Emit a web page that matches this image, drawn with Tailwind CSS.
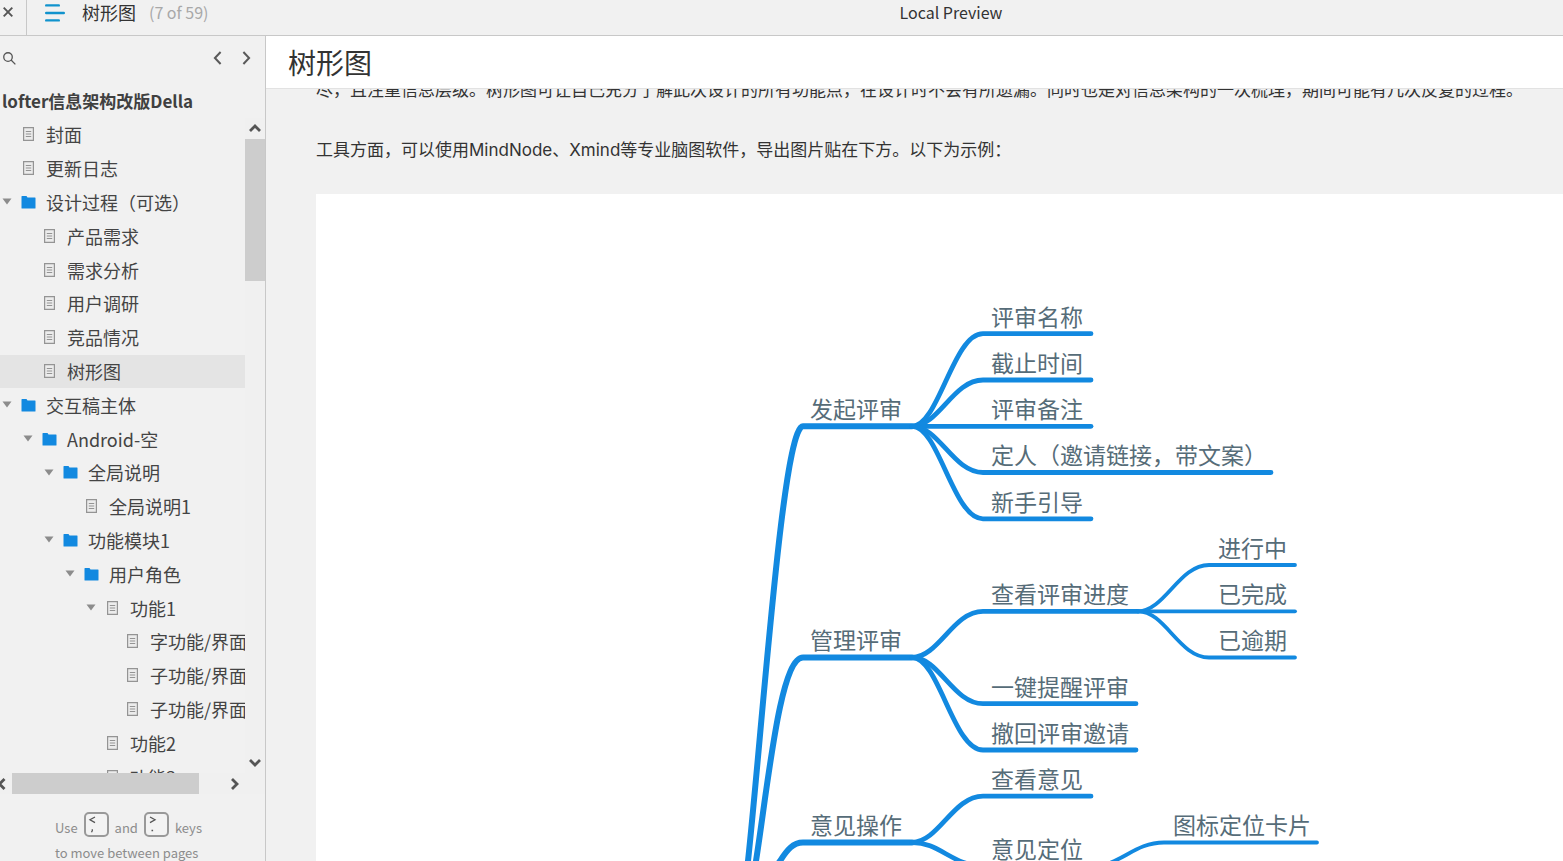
<!DOCTYPE html>
<html lang="zh-CN">
<head>
    <meta charset="UTF-8">
    <meta name="viewport" content="width=device-width, initial-scale=1.0">
    <title>树形图</title>
    <script src="https://cdn.jsdelivr.net/npm/@tailwindcss/browser@4"></script>
</head>
<body class="h-screen flex flex-col overflow-hidden bg-[#f1f1f1] text-[#333] font-['Noto_Sans_CJK_SC',sans-serif]">
    <header class="h-9 shrink-0 flex border-b border-[#c8c8c8]">
        <div class="w-[339px] shrink-0 flex">
            <button class="w-[27px] h-full pl-[3px] pb-[11px] border-r border-[#c8c8c8]" aria-label="关闭">
                <svg class="w-[10px] h-[10px]" viewBox="0 0 10 10" fill="none" stroke="#555" stroke-width="1.9"><path d="M.7.7l8.6 8.6M9.3.7L.7 9.3"/></svg>
            </button>
            <button class="ml-[18px] h-[25px] flex items-center" aria-label="页面列表">
                <svg class="w-5 h-[18px]" viewBox="0 0 20 18" fill="none" stroke="#1193cd" stroke-width="2.4" stroke-linecap="round"><path d="M1.2 1.4h12.6M1.2 9h17.6M1.2 16.4h12.6"/></svg>
            </button>
            <span class="ml-[17px] text-lg leading-6">树形图</span>
            <span class="ml-[13px] text-base leading-6 text-[#a8a8a8]">(7 of 59)</span>
        </div>
        <div class="flex-1 text-center text-base leading-6">Local Preview</div>
    </header>

    <div class="flex-1 min-h-0 flex">
        <aside class="w-[266px] shrink-0 flex flex-col border-r border-[#c8c8c8] text-[#444]">
            <div class="h-11 shrink-0 flex items-center pl-[3px] pr-[14px]">
                <button aria-label="搜索">
                    <svg class="w-[13px] h-[13px]" viewBox="0 0 14 14" fill="none" stroke="#555" stroke-width="1.4"><circle cx="5.4" cy="5.4" r="4.6"/><path d="M8.7 8.7l4.6 4.6"/></svg>
                </button>
                <button class="ml-auto" aria-label="上一页">
                    <svg class="w-[9px] h-[14px]" viewBox="0 0 9 14" fill="none" stroke="#5a5a5a" stroke-width="2"><path d="M7.6 1L1.9 7l5.7 6"/></svg>
                </button>
                <button class="ml-5" aria-label="下一页">
                    <svg class="w-[9px] h-[14px]" viewBox="0 0 9 14" fill="none" stroke="#5a5a5a" stroke-width="2"><path d="M1.4 1l5.7 6-5.7 6"/></svg>
                </button>
            </div>
            <h2 class="h-[38px] shrink-0 pl-[2px] pt-1 text-[17px] leading-[34px] font-bold text-[#404040] whitespace-nowrap"><a href="#">lofter信息架构改版Della</a></h2>

            <div class="h-[655px] shrink-0 flex">
                <nav class="flex-1 min-w-0 overflow-hidden">
                    <ul id="tree" class="h-[676px] grid auto-rows-fr"></ul>
                </nav>
                <div class="w-5 shrink-0 flex flex-col items-center bg-[#f0f0f0]">
                    <svg class="w-3 h-[21px]" viewBox="0 0 12 21" fill="none" stroke="#555" stroke-width="2.8"><path d="M1 13l5-5 5 5"/></svg>
                    <div class="w-full h-[142px] bg-[#cdcdcd]"></div>
                    <svg class="mt-auto w-3 h-[21px]" viewBox="0 0 12 21" fill="none" stroke="#555" stroke-width="2.8"><path d="M1 8l5 5 5-5"/></svg>
                </div>
            </div>
            <div class="h-[21px] shrink-0 flex items-center bg-[#f0f0f0] pr-6">
                <svg class="w-3 h-3" viewBox="0 0 12 12" fill="none" stroke="#555" stroke-width="2.8"><path d="M4.500 1L-.5 6l5 5"/></svg>
                <div class="w-[187px] h-full bg-[#cdcdcd]"></div>
                <svg class="ml-auto w-3 h-3" viewBox="0 0 12 12" fill="none" stroke="#555" stroke-width="2.8"><path d="M3 1l5 5-5 5"/></svg>
            </div>

            <div class="pt-[18px] pl-[55px] text-[13px] leading-5 text-[#8c8c8c] whitespace-nowrap">
                <div class="flex items-start">
                    <span class="pt-[6px]">Use</span>
                    <kbd class="ml-[6px] w-[25px] h-[25px] rounded-[5px] border-2 border-[#999] bg-[#f3f3f3]">
                        <svg class="w-[21px] h-[21px]" viewBox="0 0 21 21" fill="none" stroke="#555" stroke-width="1.3"><path d="M9 3L4 5.800l5 2.800M6.300 15.200v1.500l-.8 1.500"/></svg>
                    </kbd>
                    <span class="ml-[6px] pt-[6px]">and</span>
                    <kbd class="ml-[6px] w-[25px] h-[25px] rounded-[5px] border-2 border-[#999] bg-[#f3f3f3]">
                        <svg class="w-[21px] h-[21px]" viewBox="0 0 21 21" fill="none" stroke="#555" stroke-width="1.3"><path d="M4 3l5 2.800-5 2.800M5.500 16.500h1.600"/></svg>
                    </kbd>
                    <span class="ml-[6px] pt-[6px]">keys</span>
                </div>
                <p class="pt-[5px]">to move between pages</p>
            </div>
        </aside>

        <main class="flex-1 min-w-0 flex flex-col">
            <h1 class="h-[53px] shrink-0 pl-[22px] bg-white border-b border-[#e2e2e2] text-[28px] leading-[53px]">树形图</h1>
            <article class="flex-1 min-h-0 overflow-hidden flex flex-col pl-[50px]">
                <div class="shrink-0 -mt-[14px] text-[17px] leading-[30px] whitespace-nowrap font-[Inter,'Noto_Sans_CJK_SC',sans-serif]">
                    <p>尽，且注重信息层级。树形图可让自己充分了解此次设计的所有功能点，在设计时不会有所遗漏。同时也是对信息架构的一次梳理，期间可能有几次反复的过程。</p>
                    <p class="mt-[30px] mb-[29px]">工具方面，可以使用MindNode、Xmind等专业脑图软件，导出图片贴在下方。以下为示例：</p>
                </div>
                <div class="flex-1 min-h-0 overflow-hidden bg-white">
                    <svg class="w-[1247px] h-[700px] max-w-none" viewBox="0 0 1247 700" role="img" aria-label="评审功能树形图">
                        <g fill="none" stroke="#1289e0" stroke-linecap="round" stroke-linejoin="round">
                            <!-- 主干 -->
                            <g stroke-width="6">
                                <path d="M426 730L432 667C447 527 467 232 487 232.300H596"/>
                                <path d="M430 730L440 667C452 591 464 463.500 487 463.500H596"/>
                                <path d="M440 700L464 667C471 656 477 648.500 487 648.500H596"/>
                            </g>
                            <!-- 二级 -->
                            <g stroke-width="4.800">
                                <path d="M596 232.300C623 232 637 139.700 667 139.700H775"/>
                                <path d="M596 232.300C623 232 637 186 667 186H775"/>
                                <path d="M596 232.300H775"/>
                                <path d="M596 232.300C623 232 637 278.500 667 278.500H955"/>
                                <path d="M596 232.300C623 232 637 324.800 667 324.800H775"/>
                                <path d="M596 463.500C623 463 637 417.300 667 417.300H822"/>
                                <path d="M596 463.500C623 463 637 509.700 667 509.700H820"/>
                                <path d="M596 463.500C623 463 637 556 667 556H820"/>
                                <path d="M596 648.500C623 648 637 602.200 667 602.200H775"/>
                                <path d="M596 648.500C623 648 637 672 667 672H775"/>
                            </g>
                            <!-- 三级 -->
                            <g stroke-width="3.800">
                                <path d="M822 417.300C849 417 863 371 893 371H979"/>
                                <path d="M822 417.300H979"/>
                                <path d="M822 417.300C849 417 863 463.500 893 463.500H979"/>
                                <path d="M777 672C804 672 818 648.500 848 648.500H1001"/>
                            </g>
                        </g>
                        <g class="text-[23px]" fill="#566c78">
                            <text x="494" y="224">发起评审</text>
                            <text x="494" y="455">管理评审</text>
                            <text x="494" y="640">意见操作</text>
                            <text x="675" y="132">评审名称</text>
                            <text x="675" y="178">截止时间</text>
                            <text x="675" y="224">评审备注</text>
                            <text x="675" y="270">定人（邀请链接，带文案）</text>
                            <text x="675" y="317">新手引导</text>
                            <text x="675" y="409">查看评审进度</text>
                            <text x="675" y="502">一键提醒评审</text>
                            <text x="675" y="548">撤回评审邀请</text>
                            <text x="675" y="594">查看意见</text>
                            <text x="675" y="664">意见定位</text>
                            <text x="902" y="363">进行中</text>
                            <text x="902" y="409">已完成</text>
                            <text x="902" y="455">已逾期</text>
                            <text x="857" y="640">图标定位卡片</text>
                        </g>
                    </svg>
                </div>
            </article>
        </main>
    </div>

    <script>
        // [层级, 类型, 名称, 是否展开]
        const pages = [
            [0, 'page', '封面'],
            [0, 'page', '更新日志'],
            [0, 'folder', '设计过程（可选）', true],
            [1, 'page', '产品需求'],
            [1, 'page', '需求分析'],
            [1, 'page', '用户调研'],
            [1, 'page', '竞品情况'],
            [1, 'page', '树形图'],
            [0, 'folder', '交互稿主体', true],
            [1, 'folder', 'Android-空', true],
            [2, 'folder', '全局说明', true],
            [3, 'page', '全局说明1'],
            [2, 'folder', '功能模块1', true],
            [3, 'folder', '用户角色', true],
            [4, 'page', '功能1', true],
            [5, 'page', '字功能/界面'],
            [5, 'page', '子功能/界面'],
            [5, 'page', '子功能/界面'],
            [4, 'page', '功能2'],
            [4, 'page', '功能3'],
        ];
        const indent = ['pl-0', 'pl-[21px]', 'pl-[42px]', 'pl-[63px]', 'pl-[84px]', 'pl-[104px]'];
        const icons = {
            page: '<svg class="ml-[2px] mr-3 w-[11px] h-[14px] shrink-0" viewBox="0 0 11 14" fill="#ececec" stroke="#949494" stroke-width="1.2"><path d="M.6.6h9.800v12.800H.6z"/><path d="M2.800 4.500h5.400M2.800 7h5.400M2.800 9.500h5.400"/></svg>',
            folder: '<svg class="mr-[10px] w-[15px] h-[14px] shrink-0" viewBox="0 0 15 14" fill="#1289e0"><path d="M.5 1.500q0-.5.500-.5h4.500l1 1.500h7.500q.5 0 .5.500v10q0 .5-.5.500H1q-.5 0-.5-.5z"/></svg>',
        };
        const arrow = '<svg class="w-[10px] h-[7px]" viewBox="0 0 10 7" fill="#8c8c8c"><path d="M.5.5h9L5 6.500z"/></svg>';

        document.getElementById('tree').innerHTML = pages.map(([level, type, name, open]) => `
            <li class="flex items-center pb-px ${indent[level]} ${name === '树形图' ? 'bg-[#e4e4e4]' : ''}">
                ${open ? `<button class="w-[21px] shrink-0 pl-[2px] flex" aria-label="折叠">${arrow}</button>` : '<span class="w-[21px] shrink-0"></span>'}
                <a href="#" class="flex items-center text-lg leading-8 whitespace-nowrap">${icons[type]}${name}</a>
            </li>
        `).join('');
    </script>
</body>
</html>
